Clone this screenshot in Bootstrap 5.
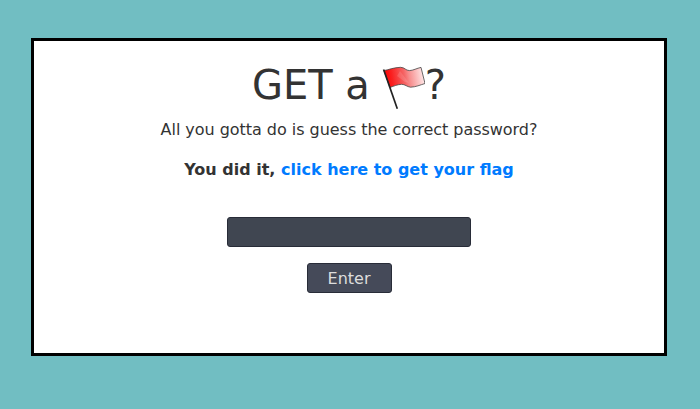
<!DOCTYPE html>
<html lang="en">
<head>
<meta charset="utf-8">
<title>Get a flag</title>
<link href="https://cdn.jsdelivr.net/npm/bootstrap@5.3.0/dist/css/bootstrap.min.css" rel="stylesheet">
<style>
body { background: #71bec2; color: #333; font-family: "DejaVu Sans", sans-serif; line-height: 24px; }
.panel { width: 636px; height: 318px; margin: 38px 0 0 31px; border: 3px solid #000; background: #fff; padding-top: 20px; }
.title { font-size: 40px; line-height: 48px; height: 48px; margin-bottom: 9px; }
.flag { width: 54px; height: 48px; margin-left: 1px; }
.hint { letter-spacing: -.035px; }
.reward { color: #007bff; }
.guess-form { margin-top: 35px; }
.guess { width: 244px; height: 30px; background: #404651; border: 1px solid #282c38; border-radius: 3px; color: #ddd; }
.enter { width: 85px; height: 30px; background: #454a59; border: 1px solid #282c38; border-radius: 3px; color: #ddd; line-height: 28px; padding: 1px 0 0; }
</style>
</head>
<body>
<main class="panel text-center">
<h1 class="title fw-normal d-flex justify-content-center"><span>GET a</span><svg class="flag" viewBox="0 0 54 48" role="img" aria-label="flag">
<defs>
<linearGradient id="cloth" gradientUnits="userSpaceOnUse" x1="13" y1="19" x2="54" y2="13"><stop offset="0" stop-color="#f00"/><stop offset=".2" stop-color="#fa2020"/><stop offset=".5" stop-color="#f56565"/><stop offset=".62" stop-color="#f78f8f"/><stop offset="1" stop-color="#fff0f0"/></linearGradient>
</defs>
<path d="M13 9.6C18 8.6 23 6.5 29.5 6.3C34 6.5 34.5 9.5 38.5 9.6C42 9.5 46 7.2 50 6.4L54 22.5C49 24 45 26 39.5 26.2C36 25.8 34 23.3 30.5 23.3C26.500 23.500 23 25 19 26.500Z" fill="url(#cloth)" stroke="#444" stroke-width=".8" stroke-linejoin="round"/>
<path d="M29 10L38 22L34 21L26 15Z" fill="#fff" opacity=".13"/>
<path d="M12.600 8.500L26.300 47.700" fill="none" stroke="#222" stroke-width="1.700"/>
</svg><span>?</span></h1>
<p class="hint mb-3">All you gotta do is guess the correct password?</p>
<p class="fw-bold mb-0">You did it, <a class="reward text-decoration-none" href="#">click here to get your flag</a></p>
<form class="guess-form d-flex flex-column align-items-center gap-3"><input class="guess" type="text" aria-label="Password"><button class="enter" type="button">Enter</button></form>
</main>
<script src="https://cdn.jsdelivr.net/npm/bootstrap@5.3.0/dist/js/bootstrap.bundle.min.js"></script>
</body>
</html>
